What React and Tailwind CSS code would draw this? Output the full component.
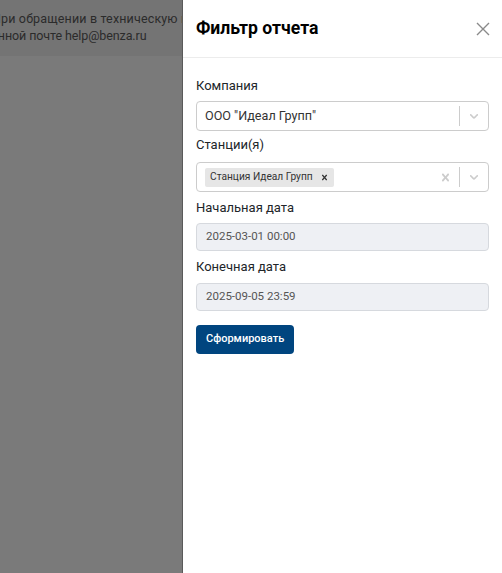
import React from "react";

const Chevron = () => (
  <svg width="14" height="14" viewBox="0 0 20 20" className="text-[#cccccc]" fill="currentColor">
    <path d="M4.516 7.548c0.436-0.446 1.043-0.481 1.576 0l3.908 3.747 3.908-3.747c0.533-0.481 1.141-0.446 1.574 0 0.436 0.445 0.408 1.197 0 1.615-0.406 0.418-4.695 4.502-4.695 4.502-0.217 0.223-0.502 0.335-0.787 0.335s-0.57-0.112-0.789-0.335c0 0-4.287-4.084-4.695-4.502s-0.436-1.17 0-1.615z" />
  </svg>
);

const Cross = ({ size = 14, className = "" }) => (
  <svg width={size} height={size} viewBox="0 0 20 20" className={className} fill="currentColor">
    <path d="M14.348 14.849c-0.469 0.469-1.229 0.469-1.697 0l-2.651-3.030-2.651 3.029c-0.469 0.469-1.229 0.469-1.697 0-0.469-0.469-0.469-1.229 0-1.697l2.758-3.15-2.759-3.152c-0.469-0.469-0.469-1.228 0-1.697s1.228-0.469 1.697 0l2.652 3.031 2.651-3.031c0.469-0.469 1.228-0.469 1.697 0s0.469 1.229 0 1.697l-2.758 3.152 2.758 3.15c0.469 0.469 0.469 1.229 0 1.698z" />
  </svg>
);

const Label = ({ children, className = "" }) => (
  <div className={"text-[13px] leading-[18px] text-[#212529] " + className}>{children}</div>
);

export default function App() {
  return (
    <div
      className="flex w-[502px] h-[573px] overflow-hidden"
      style={{ fontFamily: "Roboto, 'Noto Sans', sans-serif" }}
    >
      {/* page behind the backdrop */}
      <div className="w-[183px] shrink-0 bg-[#7a7a7a] border-r border-[#5a5a5a] overflow-hidden">
        <div className="h-[56px] bg-[#747474] pt-[10px] text-[12.5px] leading-[17px] text-[#2b2b2b] whitespace-nowrap">
          <div className="-ml-[8px] tracking-[0.15px]">При обращении в техническую поддержку</div>
          <div className="-ml-[66px] tracking-[-0.1px]">по электронной почте help@benza.ru</div>
        </div>
      </div>

      {/* drawer */}
      <div className="flex-1 bg-white flex flex-col">
        <div className="h-[58px] border-b border-[#ececec] flex items-center justify-between pl-[13px] pr-[11px]">
          <h2 className="text-[17.6px] font-bold text-black">Фильтр отчета</h2>
          <svg width="16" height="16" viewBox="0 0 16 16" stroke="#8a8a8a" strokeWidth="1.4">
            <path d="M2 2L14 14M14 2L2 14" />
          </svg>
        </div>

        <div className="px-[13px] pt-[19px] flex flex-col">
          <Label className="mb-[6px]">Компания</Label>
          <div className="h-[30px] border border-[#cccccc] rounded-[4px] flex items-center pl-[8px]">
            <span className="flex-1 text-[12.6px] text-[#333333]">ООО "Идеал Групп"</span>
            <span className="w-px h-[20px] bg-[#cccccc]"></span>
            <span className="w-[28px] flex justify-center"><Chevron /></span>
          </div>

          <Label className="mt-[5px] mb-[8px]">Станции(я)</Label>
          <div className="h-[30px] border border-[#cccccc] rounded-[4px] flex items-center pl-[8px]">
            <div className="flex-1 flex">
              <span className="bg-[#e6e6e6] rounded-[2px] h-[19px] flex items-center pl-[5px] pr-[4px] text-[10.2px] text-[#333333]">
                Станция Идеал Групп
                <Cross size={11} className="ml-[6px] text-[#333333]" />
              </span>
            </div>
            <span className="w-[28px] flex justify-center"><Cross size={15} className="text-[#cccccc]" /></span>
            <span className="w-px h-[20px] bg-[#cccccc]"></span>
            <span className="w-[28px] flex justify-center"><Chevron /></span>
          </div>

          <Label className="mt-[7px] mb-[6px]">Начальная дата</Label>
          <div className="h-[28px] bg-[#eef0f4] border border-[#d6d9de] rounded-[4px] flex items-center pl-[9px] text-[11.5px] text-[#555555]">
            2025-03-01 00:00
          </div>

          <Label className="mt-[7px] mb-[7px]">Конечная дата</Label>
          <div className="h-[28px] bg-[#eef0f4] border border-[#d6d9de] rounded-[4px] flex items-center pl-[9px] text-[11.5px] text-[#555555]">
            2025-09-05 23:59
          </div>

          <div className="mt-[14px]">
            <button className="h-[29px] px-[10px] bg-[#00457f] text-white text-[11px] font-medium rounded-[4px]">
              Сформировать
            </button>
          </div>
        </div>
      </div>
    </div>
  );
}
